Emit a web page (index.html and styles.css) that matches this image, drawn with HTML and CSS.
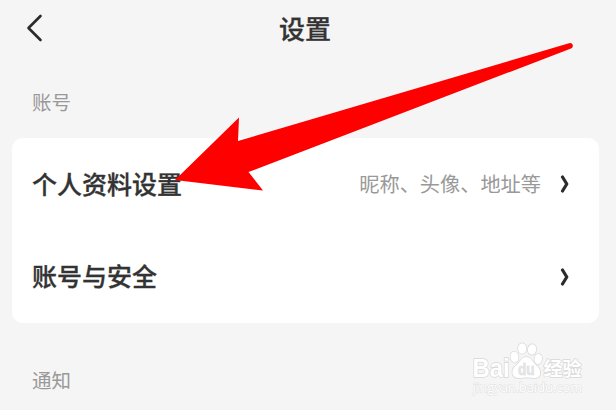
FILE: index.html
```
<!DOCTYPE html>
<html lang="zh-CN">
<head>
    <meta charset="UTF-8">
    <meta name="viewport" content="width=device-width, initial-scale=1.0">
    <title>设置</title>
    <link rel="stylesheet" href="styles.css">
</head>
<body>
    <div class="page">
        <header class="header">
            <svg class="back" width="20" height="30" viewBox="0 0 20 30">
                <path d="M14.5 3 L2.5 15 L14.5 27"/>
            </svg>
            <h1 class="title">设置</h1>
        </header>

        <h2 class="section-title">账号</h2>
        <div class="card">
            <div class="row">
                <span class="label">个人资料设置</span>
                <span class="hint">昵称、头像、地址等</span>
                <svg class="chevron" width="10" height="18" viewBox="0 0 10 18">
                    <path d="M2.5 2 L6.800 9 L2.500 16"/>
                </svg>
            </div>
            <div class="row">
                <span class="label">账号与安全</span>
                <svg class="chevron" width="10" height="18" viewBox="0 0 10 18">
                    <path d="M2.500 2 L6.800 9 L2.500 16"/>
                </svg>
            </div>
        </div>
        <h2 class="section-title last">通知</h2>

        <!-- red pointer to the profile row -->
        <svg class="arrow" width="616" height="410" viewBox="0 0 616 410">
            <path d="M175 180 L239 117.500 L238 141 L569 43.200 Q572 42.500 572.800 45 Q573.200 47.500 571 48.500 L248.500 172 L263 190.500 Z"/>
        </svg>

        <!-- watermark -->
        <svg class="watermark" width="120" height="60" viewBox="466 340 120 60">
            <text class="brand" x="472.500" y="377" textLength="37" lengthAdjust="spacingAndGlyphs">Bai</text>
            <g class="paw">
                <ellipse cx="514.500" cy="357" rx="4" ry="5.400" transform="rotate(-8 514.500 357)"/>
                <ellipse cx="522.200" cy="348.500" rx="4.200" ry="5.300"/>
                <ellipse cx="532" cy="349.500" rx="4.200" ry="5.300" transform="rotate(8 532 349.500)"/>
                <ellipse cx="538.200" cy="359" rx="3.800" ry="5.200" transform="rotate(12 538.200 359)"/>
                <path d="M526 357 C521 357 520 363 515.500 366 C511 369 511 378 518 378 C522 378 524 377.500 527 377.500 C530 377.500 531 378 534.500 378 C542 378 541.500 370 537.500 366.500 C533 363 532 357 526 357 Z"/>
            </g>
            <text class="du" x="518" y="375" textLength="16.500" lengthAdjust="spacingAndGlyphs">du</text>
            <text class="jingyan" x="543.500" y="375.500" textLength="38">经验</text>
            <text class="site" x="473" y="392" textLength="109" lengthAdjust="spacingAndGlyphs">jingyan.baidu.com</text>
        </svg>
    </div>
</body>
</html>
```
FILE: styles.css
```
* {
    box-sizing: border-box;
}

body {
    margin: 0;
    background: #f5f5f5;
    font-family: "Noto Sans CJK SC", sans-serif;
    overflow: hidden;
}

.page {
    position: relative;
    height: 410px;
    padding: 0 17px 0 12px;
    overflow: hidden;
}

.header {
    display: grid;
    grid-template-columns: 40px 1fr 40px;
    align-items: center;
    height: 56px;
    padding: 0 14px 0 13px;
}

.back {
    margin-left: 1px;
}

.back path,
.chevron path {
    fill: none;
    stroke: #2b2b2b;
    stroke-width: 2.6;
    stroke-linecap: round;
    stroke-linejoin: round;
}

.title {
    margin: 0;
    font-size: 26px;
    font-weight: 500;
    line-height: 56px;
    text-align: center;
    color: #333;
    -webkit-text-stroke: 0.3px #333;
}

.section-title {
    margin: 32px 0 0 20px;
    height: 50px;
    font-size: 19.5px;
    font-weight: 400;
    line-height: 28px;
    color: #999;
}

.card {
    height: 185px;
    padding: 0 29px 0 20px;
    background: #fff;
    border-radius: 11px;
}

.row {
    display: flex;
    align-items: center;
    height: 92.5px;
}

.label {
    flex: 1;
    padding-bottom: 3px;
    font-size: 25px;
    font-weight: 500;
    color: #333;
    -webkit-text-stroke: 0.3px #333;
}

.hint {
    margin-right: 19px;
    padding-bottom: 2px;
    font-size: 20.2px;
    color: #999;
}

.chevron path {
    stroke-width: 3.2;
}

.section-title.last {
    margin-top: 43px;
}

.arrow {
    position: absolute;
    top: 0;
    left: 0;
    fill: #fe0000;
}

.watermark {
    position: absolute;
    top: 340px;
    left: 466px;
    fill: #fff;
    stroke: #d8d8d8;
    stroke-width: 1.4;
    paint-order: stroke;
    font-family: "Liberation Sans", "Noto Sans CJK SC", sans-serif;
}

.brand {
    font-size: 25px;
    font-weight: bold;
}

.du {
    font-size: 17px;
    font-weight: bold;
    fill: #e4e4e4;
    stroke: #d0d0d0;
    stroke-width: 0.5;
}

.jingyan {
    font-family: "Noto Sans CJK SC", sans-serif;
    font-size: 19px;
    font-weight: bold;
}

.site {
    font-family: "Open Sans", sans-serif;
    font-size: 12.5px;
    stroke: #dedede;
    stroke-width: 1;
}
```
